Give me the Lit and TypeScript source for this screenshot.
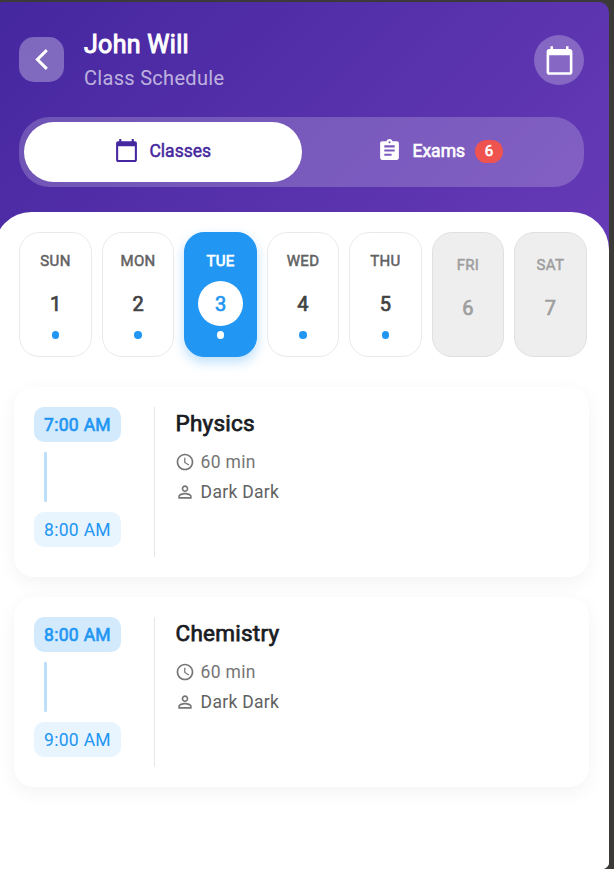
import { LitElement, html, css, svg } from "lit";
import { customElement, property, state } from "lit/decorators.js";
import { classMap } from "lit/directives/class-map.js";

const paths = {
  back: "M18.1 4 16.1 2 6 12l10.1 10 2-2L10.1 12z",
  calendar:
    "M20 3h-1V1h-2v2H7V1H5v2H4c-1.1 0-2 .9-2 2v16c0 1.1.9 2 2 2h16c1.1 0 2-.9 2-2V5c0-1.1-.9-2-2-2zm0 18H4V8h16v13z",
  assignment:
    "M19 3h-4.18C14.4 1.84 13.3 1 12 1c-1.3 0-2.4.84-2.82 2H5c-1.1 0-2 .9-2 2v14c0 1.1.9 2 2 2h14c1.1 0 2-.9 2-2V5c0-1.1-.9-2-2-2zm-7 0c.55 0 1 .45 1 1s-.45 1-1 1-1-.45-1-1 .45-1 1-1zm2 14H7v-2h7v2zm3-4H7v-2h10v2zm0-4H7V7h10v2z",
  clock:
    "M11.99 2C6.47 2 2 6.48 2 12s4.47 10 9.99 10C17.52 22 22 17.52 22 12S17.52 2 11.99 2zM12 20c-4.42 0-8-3.58-8-8s3.58-8 8-8 8 3.58 8 8-3.58 8-8 8zm.5-13H11v6l5.25 3.15.75-1.23-4.5-2.67z",
  person:
    "M12 5.9a2.1 2.1 0 1 1 0 4.2 2.1 2.1 0 0 1 0-4.2m0 9c2.97 0 6.1 1.46 6.1 2.1v1.1H5.9V17c0-.64 3.13-2.1 6.1-2.1M12 4C9.79 4 8 5.79 8 8s1.79 4 4 4 4-1.79 4-4-1.79-4-4-4zm0 9c-2.67 0-8 1.34-8 4v3h16v-3c0-2.66-5.33-4-8-4z",
};

const icon = (name: keyof typeof paths, size: number) => html`<svg
  width=${size}
  height=${size}
  viewBox="0 0 24 24"
  fill="currentColor"
>
  ${svg`<path d=${paths[name]}></path>`}
</svg>`;

@customElement("day-pill")
class DayPill extends LitElement {
  @property() name = "";
  @property({ type: Number }) date = 1;
  @property({ type: Boolean }) selected = false;
  @property({ type: Boolean }) off = false;

  static styles = css`
    :host { display: block; width: 72.3px; flex: none; }
    .pill {
      box-sizing: border-box; height: 125px; border-radius: 20px;
      border: 1px solid #eaeaea; background: #fff; color: #424242;
      display: flex; flex-direction: column; align-items: center; padding-top: 19px;
    }
    .name { font-size: 15px; line-height: 18px; letter-spacing: 0.35px; color: #616161; -webkit-text-stroke: 0.5px; }
    .date {
      width: 45px; height: 45px; border-radius: 50%; margin-top: 11px;
      display: grid; place-items: center; font-size: 20px; -webkit-text-stroke: 0.7px;
    }
    .dot { width: 7.5px; height: 7.5px; border-radius: 50%; background: #2196f3; margin-top: 5px; }
    .selected { background: #2196f3; border-color: #2196f3; box-shadow: 0 5px 12px rgba(33, 150, 243, 0.3); }
    .selected .name { color: #fff; -webkit-text-stroke: 0.75px; }
    .selected .date { background: #fff; color: #2196f3; }
    .selected .dot { background: #fff; }
    .off { background: #eee; border-color: #e0e0e0; padding-top: 23px; }
    .off .name, .off .date { color: #9e9e9e; }
  `;

  render() {
    return html`<div class=${classMap({ pill: true, selected: this.selected, off: this.off })}>
      <div class="name">${this.name}</div>
      <div class="date">${this.date}</div>
      ${this.off ? "" : html`<div class="dot"></div>`}
    </div>`;
  }
}

@customElement("class-card")
class ClassCard extends LitElement {
  @property() subject = "";
  @property() start = "";
  @property() end = "";
  @property() teacher = "";

  static styles = css`
    :host { display: block; }
    .card {
      box-sizing: border-box; height: 190px; padding: 20px; border-radius: 20px; background: #fff;
      box-shadow: 0 5px 19px rgba(0, 0, 0, 0.05); display: flex;
    }
    .times { width: 120px; display: flex; flex-direction: column; align-items: flex-start; gap: 10px; }
    .time {
      box-sizing: border-box; width: 87px; height: 35px; border-radius: 10px; background: #e8f4fe;
      color: #2196f3; font-size: 17.5px; letter-spacing: 0.3px; display: grid; place-items: center; white-space: nowrap;
    }
    .start { background: #d3eafd; -webkit-text-stroke: 0.65px; }
    .line { width: 2.5px; height: 50px; margin-left: 10px; border-radius: 1.25px; background: #bcdffb; }
    .divider { width: 1px; height: 150px; background: #e6e6e6; }
    .info { padding-left: 20px; color: #757575; }
    .subject { font-size: 22.5px; line-height: 32px; letter-spacing: 0.25px; color: #1a1c23; -webkit-text-stroke: 0.75px; padding-left: 0.5px; }
    .row { display: flex; align-items: center; gap: 5.6px; height: 20px; margin-top: 10px; font-size: 17.5px; letter-spacing: 0.3px; }
    .row:nth-child(2) { margin-top: 13px; }
    .teacher { color: #616161; }
    .row svg { color: #757575; }
  `;

  render() {
    return html`<div class="card">
      <div class="times">
        <div class="time start">${this.start}</div>
        <div class="line"></div>
        <div class="time">${this.end}</div>
      </div>
      <div class="divider"></div>
      <div class="info">
        <div class="subject">${this.subject}</div>
        <div class="row">${icon("clock", 20)}<span>60 min</span></div>
        <div class="row">${icon("person", 20)}<span class="teacher">${this.teacher}</span></div>
      </div>
    </div>`;
  }
}

@customElement("app-root")
class AppRoot extends LitElement {
  @state() private selected = 3;

  static styles = css`
    :host {
      display: block; box-sizing: border-box; height: 869px; padding-top: 2px; overflow: hidden;
      background: #3b3a39; font-family: Roboto, "Liberation Sans", sans-serif;
    }
    .screen {
      width: 615px; height: 867px; margin-left: -6px; overflow: hidden; border-radius: 10px 10px 7px 7px;
      background: linear-gradient(135deg, #4527a0, #673ab7) 0 0 / 100% 248px no-repeat #fff;
    }
    .header { height: 210px; box-sizing: border-box; padding: 25px 25px 0; }
    .top { height: 65px; display: flex; align-items: center; }
    .back {
      width: 45px; height: 45px; border-radius: 15px; background: rgba(255, 255, 255, 0.3);
      color: #fff; display: grid; place-items: center;
    }
    .titles { flex: 1; margin-left: 20px; }
    .title { font-size: 25px; line-height: 30px; letter-spacing: 0.3px; color: #fff; -webkit-text-stroke: 1px; padding-top: 1px; }
    .subtitle { font-size: 20px; line-height: 24px; margin-top: 6px; letter-spacing: 0.3px; color: rgba(255, 255, 255, 0.65); }
    .calendar {
      width: 50px; height: 50px; border-radius: 50%; background: rgba(255, 255, 255, 0.25);
      color: #fff; display: grid; place-items: center;
    }
    .calendar svg { margin-top: 1px; }
    .tabs {
      box-sizing: border-box; height: 70px; margin-top: 25px; padding: 5px; border-radius: 31px;
      background: rgba(255, 255, 255, 0.2); display: flex;
    }
    .tab {
      flex: 1; display: flex; align-items: center; justify-content: center; gap: 10px; border-radius: 30px;
      font-size: 17.5px; color: #fff; -webkit-text-stroke: 0.65px;
    }
    .tab svg { -webkit-text-stroke: 0; margin-top: -3px; }
    .tab span { margin-top: -2px; }
    .tab.active { background: #fff; color: #4527a0; -webkit-text-stroke: 0.5px; }
    .tab .badge {
      width: 28px; height: 23px; border-radius: 12px; background: #ef5350; margin-top: -2px;
      font-size: 15px; display: grid; place-items: center; line-height: 23px;
    }
    .body {
      height: 657px; box-sizing: border-box; border-radius: 37.5px 37.5px 0 0; background: #fff; padding: 20px 20px 0;
    }
    .days { display: flex; gap: 10.2px; margin-left: 5.4px; }
    .list { display: flex; flex-direction: column; gap: 20px; margin-top: 30px; }
  `;

  render() {
    const names = ["SUN", "MON", "TUE", "WED", "THU", "FRI", "SAT"];
    return html`<div class="screen">
      <div class="header">
        <div class="top">
          <div class="back">${icon("back", 25)}</div>
          <div class="titles">
            <div class="title">John Will</div>
            <div class="subtitle">Class Schedule</div>
          </div>
          <div class="calendar">${icon("calendar", 31)}</div>
        </div>
        <div class="tabs">
          <div class="tab active">${icon("calendar", 25)}<span>Classes</span></div>
          <div class="tab">${icon("assignment", 25)}<span>Exams</span><span class="badge">6</span></div>
        </div>
      </div>
      <div class="body">
        <div class="days">
          ${names.map(
            (name, i) => html`<day-pill
              name=${name}
              date=${i + 1}
              ?selected=${i + 1 === this.selected}
              ?off=${i > 4}
            ></day-pill>`
          )}
        </div>
        <div class="list">
          <class-card subject="Physics" start="7:00 AM" end="8:00 AM" teacher="Dark Dark"></class-card>
          <class-card subject="Chemistry" start="8:00 AM" end="9:00 AM" teacher="Dark Dark"></class-card>
        </div>
      </div>
    </div>`;
  }
}
